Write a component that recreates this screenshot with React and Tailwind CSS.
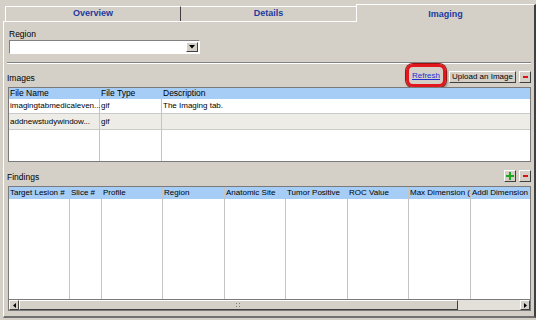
import React from 'react';

const raised = 'border border-t-white border-l-white border-r-[#404040] border-b-[#404040] bg-[#d4d0c8]';

// names are shown already shortened, as the grid shows them
const imageRows = [
  { name: 'imagingtabmedicaleven...', type: 'gif', desc: 'The Imaging tab.' },
  { name: 'addnewstudywindow...', type: 'gif', desc: '' },
];

const findingCols = [
  { label: 'Target Lesion #', w: 'w-[61px]' },
  { label: 'Slice #', w: 'w-[32px]' },
  { label: 'Profile', w: 'w-[61px]' },
  { label: 'Region', w: 'w-[62px]' },
  { label: 'Anatomic Site', w: 'w-[61px]' },
  { label: 'Tumor Positive', w: 'w-[62px]' },
  { label: 'ROC Value', w: 'w-[61px]' },
  { label: 'Max Dimension (', w: 'w-[62px]' },
  { label: 'Addl Dimension', w: 'flex-1' },
];

function MinusButton() {
  return (
    <div className={`w-[12px] h-[12px] flex items-center justify-center ${raised}`}>
      <span className="w-[5px] h-[2px] bg-[#e01010]" />
    </div>
  );
}

function PlusButton() {
  return (
    <div className={`w-[12px] h-[12px] flex items-center justify-center ${raised}`}>
      <svg width="8" height="8" viewBox="0 0 8 8">
        <path d="M3 0h2v3h3v2H5v3H3V5H0V3h3z" fill="#1ea81e" />
      </svg>
    </div>
  );
}

function App() {
  return (
    <div className="w-[536px] h-[320px] overflow-hidden bg-[#d4d0c8] font-['Liberation_Sans',Arial,sans-serif] text-black">
      {/* Tabs */}
      <div className="flex items-end h-[21px] pl-[5px]">
        <div className="w-[176px] h-[15px] border-t border-l border-white border-r border-r-[#404040] flex items-center justify-center text-[9px] font-bold text-[#1e3a9e]">
          Overview
        </div>
        <div className="w-[175px] h-[15px] border-t border-white flex items-center justify-center text-[9px] font-bold text-[#1e3a9e]">
          Details
        </div>
        <div className="relative z-10 w-[180px] h-[18px] -mb-px bg-[#d4d0c8] border-t border-l border-white border-r-2 border-r-[#404040] flex items-start justify-center pt-[3px] text-[9px] font-bold text-[#1e3a9e]">
          Imaging
        </div>
      </div>

      {/* Panel */}
      <div className="ml-[3px] w-[533px] h-[297px] border-t border-l border-white border-r-2 border-b-2 border-r-[#404040] border-b-[#707070] flex flex-col pl-[4px] pr-[3px] pb-[5px] text-[8.5px]">
        <div className="pt-[7px] ml-px leading-[11px] h-[18px]">Region</div>
        <div className="ml-px w-[191px] h-[14px] bg-white border border-t-[#808080] border-l-[#808080] border-r-white border-b-white flex justify-end items-stretch p-px">
          <div className={`w-[12px] flex items-center justify-center ${raised}`}>
            <svg width="6" height="4" viewBox="0 0 6 4"><path d="M0 0h6L3 3.5z" fill="#000" /></svg>
          </div>
        </div>

        <div className="mt-[8px] -ml-px border-t border-t-[#808080] border-b border-b-white" />

        {/* Images header row */}
        <div className="h-[23px] flex items-end">
          <div className="-ml-px mb-[3px] leading-[11px] flex-1">Images</div>
          <div className="w-[40px] h-[23px] rounded-[7px] border-[3px] border-[#e3161e] shadow-[0_0_0_1px_#9a1212,1px_2px_3px_rgba(0,0,0,0.5)] flex items-center justify-center">
            <span className="text-[#2130d2] underline leading-[10px] text-[8px]">Refresh</span>
          </div>
          <div className={`ml-[3px] mb-[4px] w-[67px] h-[12px] flex items-center justify-center leading-[10px] text-[8px] ${raised}`}>
            Upload an Image
          </div>
          <div className="ml-[3px] mb-[4px]">
            <MinusButton />
          </div>
        </div>

        {/* Images table */}
        <div className="h-[75px] border border-[#7a7a7a] bg-white flex">
          {[
            { label: 'File Name', w: 'w-[91px]', key: 'name' },
            { label: 'File Type', w: 'w-[62px]', key: 'type' },
            { label: 'Description', w: 'flex-1', key: 'desc' },
          ].map((col, i) => (
            <div key={col.label} className={`${col.w} flex flex-col ${i < 2 ? 'border-r border-[#c4c4c4]' : ''}`}>
              <div className="h-[11px] bg-[#a6cdf6] pl-px leading-[11px] whitespace-nowrap">{col.label}</div>
              {imageRows.map((r, j) => (
                <div
                  key={j}
                  className={`border-b border-[#cacaca] pl-px whitespace-nowrap text-[8px] ${
                    j === 0 ? 'h-[15px] leading-[14px] bg-white' : 'h-[16px] leading-[15px] bg-[#edece6]'
                  }`}
                >
                  {r[col.key]}
                </div>
              ))}
              <div className="flex-1 bg-white" />
            </div>
          ))}
        </div>

        {/* Findings header row */}
        <div className="h-[24px] flex items-end">
          <div className="-ml-px mb-[3px] leading-[11px] flex-1">Findings</div>
          <div className="mb-[4px]">
            <PlusButton />
          </div>
          <div className="ml-[3px] mb-[4px]">
            <MinusButton />
          </div>
        </div>

        {/* Findings table */}
        <div className="flex-1 border border-[#7a7a7a] bg-white flex flex-col">
          <div className="flex-1 flex">
            {findingCols.map((col, i) => (
              <div key={col.label} className={`${col.w} flex flex-col ${i < findingCols.length - 1 ? 'border-r border-[#c4c4c4]' : ''}`}>
                <div className="h-[12px] bg-[#a6cdf6] pl-px leading-[12px] whitespace-nowrap text-[8px]">{col.label}</div>
                <div className="flex-1 bg-white" />
              </div>
            ))}
          </div>
          <div className="h-[11px] border-t border-[#7a7a7a] bg-[#e3e0da] flex">
            <div className={`w-[10px] flex items-center justify-center ${raised}`}>
              <svg width="3" height="5" viewBox="0 0 3 5"><path d="M3 0v5L0 2.5z" fill="#000" /></svg>
            </div>
            <div className={`w-[439px] flex items-center justify-center ${raised}`}>
              <div className="grid grid-cols-2 gap-[2px] ml-[-1px]">
                <span className="w-px h-px bg-[#808080]" />
                <span className="w-px h-px bg-[#808080]" />
                <span className="w-px h-px bg-[#808080]" />
                <span className="w-px h-px bg-[#808080]" />
              </div>
            </div>
            <div className="flex-1" />
            <div className={`w-[10px] flex items-center justify-center ${raised}`}>
              <svg width="3" height="5" viewBox="0 0 3 5"><path d="M0 0v5L3 2.5z" fill="#000" /></svg>
            </div>
          </div>
        </div>
      </div>
    </div>
  );
}

export default App;
